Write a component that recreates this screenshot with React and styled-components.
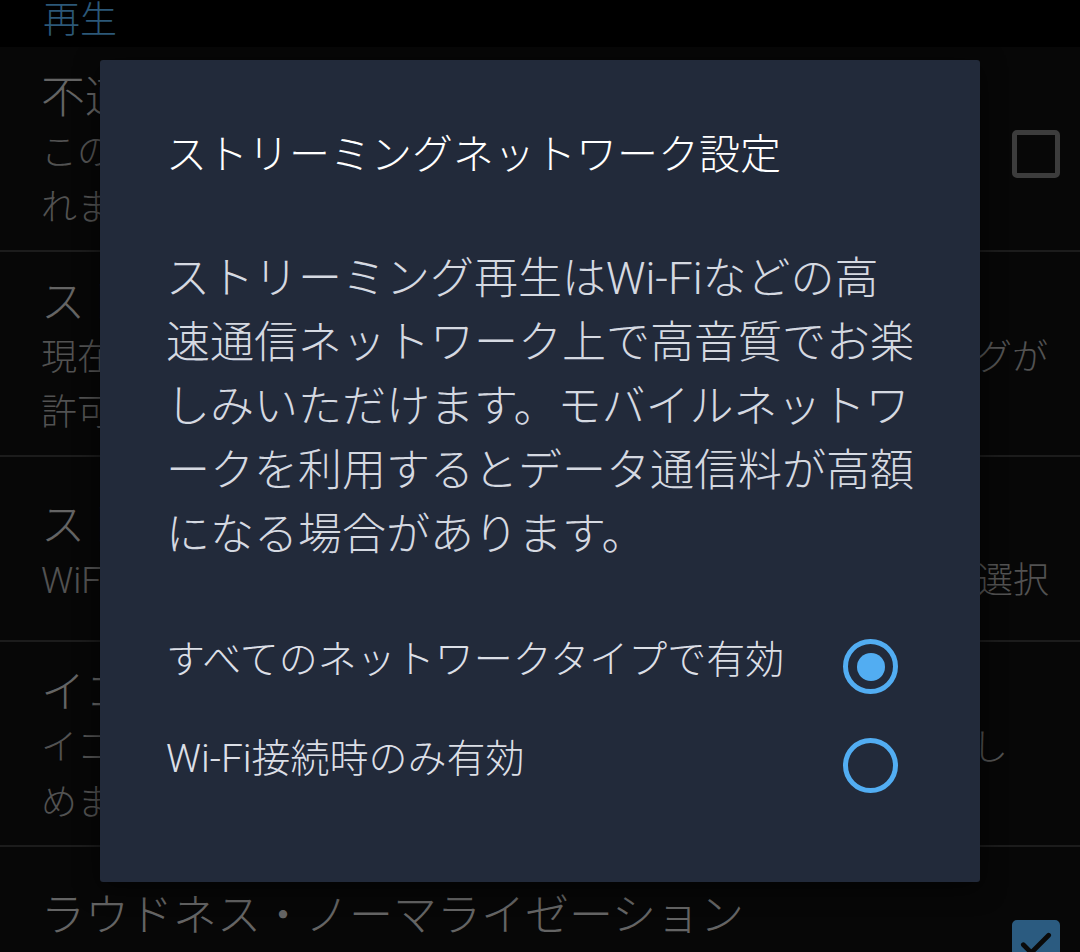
import React from 'react'
import styled, { createGlobalStyle } from 'styled-components'

const GlobalStyle = createGlobalStyle`
  html, body {
    margin: 0;
    padding: 0;
    background: #000;
  }
  body {
    font-family: Roboto, "Noto Sans CJK JP", sans-serif;
    font-weight: 300;
  }
`

const Screen = styled.div`
  position: relative;
  width: 1080px;
  height: 952px;
  overflow: hidden;
  background: #000;
`

const SectionHeader = styled.div`
  height: 47px;
  padding-left: 43px;
  font-size: 37px;
  line-height: 42px;
  color: #2c5878;
`

const List = styled.div`
  background: #070707;
`

const Row = styled.div`
  display: flex;
  align-items: center;
  min-height: 185px;
  box-sizing: border-box;
  padding: 24px 20px 14px 41px;
  border-bottom: 2px solid #1c1c1c;
`

const TextCol = styled.div`
  flex: 1;
  min-width: 0;
`

const RowTitle = styled.div`
  font-size: 44px;
  line-height: 55px;
  color: #646464;
  white-space: nowrap;
`

const RowSub = styled.div`
  font-size: 36px;
  line-height: 55px;
  color: #525252;
  white-space: nowrap;
`

const Checkbox = styled.div`
  flex: none;
  width: 48px;
  height: 48px;
  box-sizing: border-box;
  margin-left: 20px;
  border-radius: 5px;
  border: 5px solid ${p => (p.$checked ? '#2b5b80' : '#3c3c3c')};
  background: ${p => (p.$checked ? '#2b5b80' : 'transparent')};
  display: flex;
  align-items: center;
  justify-content: center;
`

const Dialog = styled.div`
  position: absolute;
  left: 100px;
  top: 60px;
  width: 880px;
  height: 822px;
  box-sizing: border-box;
  padding: 67px 50px 67px 66px;
  background: #222a3a;
  border-radius: 3px;
  box-shadow: 0 6px 24px rgba(0, 0, 0, 0.6);
`

const DialogTitle = styled.div`
  font-size: 41px;
  line-height: 56px;
  color: #ffffff;
  white-space: nowrap;
`

const Message = styled.div`
  margin-top: 64px;
  font-size: 44px;
  line-height: 64px;
  color: #d5d9e1;
`

const MessageLine = styled.div`
  white-space: nowrap;
`

const Options = styled.div`
  margin-top: 50px;
`

const OptionRow = styled.div`
  display: flex;
  align-items: center;
  justify-content: space-between;
  height: 99px;
`

const OptionLabel = styled.div`
  font-size: 39px;
  line-height: 50px;
  padding-bottom: 14px;
  color: #dcdfe6;
  white-space: nowrap;
`

const Radio = styled.div`
  flex: none;
  width: 55px;
  height: 55px;
  box-sizing: border-box;
  margin-right: 32px;
  border-radius: 50%;
  border: 5px solid #52adf2;
  display: flex;
  align-items: center;
  justify-content: center;
`

const RadioDot = styled.div`
  width: 28px;
  height: 28px;
  border-radius: 50%;
  background: #52adf2;
`

const settings = [
  {
    title: '不適切な表現を含む楽曲をブロック',
    sub: ['この設定を有効にすると、不適切な楽曲がブロックさ', 'れます。'],
    control: 'off'
  },
  {
    title: 'ストリーミング音質',
    sub: ['現在選択されているネットワークでは高音質ストリーミングが', '許可されています。']
  },
  {
    title: 'ストリーミングネットワーク設定',
    sub: ['WiFi 接続時のみ、またはすべてのネットワークタイプから選択']
  },
  {
    title: 'イコライザー',
    sub: ['イコライザーで音域を調整して、お好みのサウンドをお楽し', 'めます。']
  },
  {
    title: 'ラウドネス・ノーマライゼーション',
    sub: ['すべての楽曲が同じ音量レベルで再生されます。'],
    control: 'on'
  }
]

const message = [
  'ストリーミング再生はWi-Fiなどの高',
  '速通信ネットワーク上で高音質でお楽',
  'しみいただけます。モバイルネットワ',
  'ークを利用するとデータ通信料が高額',
  'になる場合があります。'
]

const options = [
  { label: 'すべてのネットワークタイプで有効', checked: true },
  { label: 'Wi-Fi接続時のみ有効', checked: false }
]

function CheckMark() {
  return (
    <svg width="38" height="38" viewBox="0 0 24 24" fill="none">
      <path d="M4 12.5l5 5L20 6.5" stroke="#0a0a0a" strokeWidth="3" strokeLinecap="round" strokeLinejoin="round" />
    </svg>
  )
}

export default function App() {
  return (
    <Screen>
      <GlobalStyle />
      <SectionHeader>再生</SectionHeader>
      <List>
        {settings.map(s => (
          <Row key={s.title}>
            <TextCol>
              <RowTitle>{s.title}</RowTitle>
              {s.sub.map(line => <RowSub key={line}>{line}</RowSub>)}
            </TextCol>
            {s.control ? (
              <Checkbox $checked={s.control === 'on'}>
                {s.control === 'on' ? <CheckMark /> : null}
              </Checkbox>
            ) : null}
          </Row>
        ))}
      </List>

      <Dialog>
        <DialogTitle>ストリーミングネットワーク設定</DialogTitle>
        <Message>
          {message.map(line => <MessageLine key={line}>{line}</MessageLine>)}
        </Message>
        <Options>
          {options.map(o => (
            <OptionRow key={o.label}>
              <OptionLabel>{o.label}</OptionLabel>
              <Radio>{o.checked ? <RadioDot /> : null}</Radio>
            </OptionRow>
          ))}
        </Options>
      </Dialog>
    </Screen>
  )
}
